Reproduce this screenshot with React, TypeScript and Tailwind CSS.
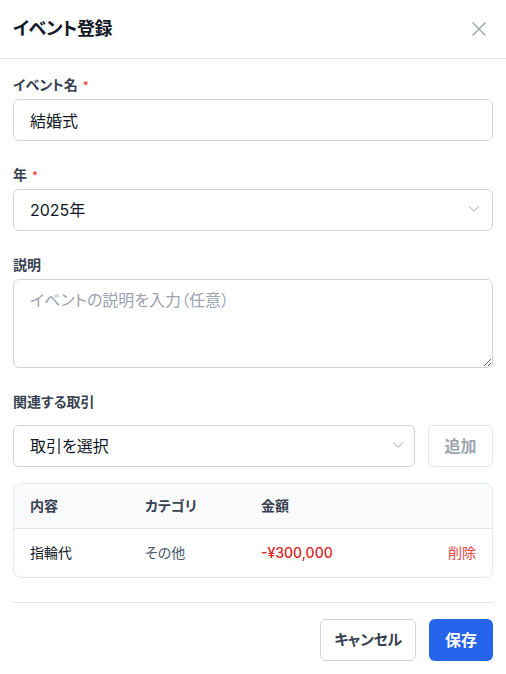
import { ChevronDown } from "lucide-react";

const rows = [{ name: "指輪代", category: "その他", amount: "-¥300,000" }];

function Label({ text, required }: { text: string; required?: boolean }) {
  return (
    <label className="flex items-center text-sm font-semibold leading-5 text-[#374151] mb-1">
      {text}
      {required && <span className="ml-[5px] text-[11px] leading-none text-[#ef4444]">*</span>}
    </label>
  );
}

export default function App() {
  return (
    <div className="w-[506px] h-[674px] bg-white text-[#111827] font-['Inter','Noto_Sans_CJK_JP',sans-serif] [font-feature-settings:'palt']">
      {/* Header */}
      <div className="h-[59px] flex items-center justify-between px-[13px] border-b border-[#e5e7eb]">
        <h1 className="text-lg font-bold text-[#111827] tracking-[-0.02em]">イベント登録</h1>
        <button className="w-6 h-6 flex items-center justify-center text-[#9ca3af] mr-[2px]">
          <svg width="14" height="14" viewBox="0 0 14 14" fill="none" stroke="currentColor" strokeWidth="1.4" strokeLinecap="round">
            <path d="M1 1l12 12M13 1L1 13" />
          </svg>
        </button>
      </div>

      {/* Body */}
      <div className="px-[13px] pt-4">
        <div className="mb-6">
          <Label text="イベント名" required />
          <input
            defaultValue="結婚式"
            className="w-full h-[42px] px-4 rounded-md border border-[#d1d5db] text-base text-[#111827] outline-none"
          />
        </div>

        <div className="mb-6">
          <Label text="年" required />
          <div className="relative">
            <select className="w-full h-[42px] pl-4 pr-10 rounded-md border border-[#d1d5db] bg-white text-base text-[#111827] appearance-none outline-none">
              <option>2025年</option>
            </select>
            <ChevronDown
              size={18}
              strokeWidth={1.3}
              className="absolute right-[10px] top-[11px] text-[#9ca3af] pointer-events-none"
            />
          </div>
        </div>

        <div className="mb-6">
          <Label text="説明" />
          <textarea
            placeholder="イベントの説明を入力（任意）"
            className="block w-full h-[89px] px-4 py-2 rounded-md border border-[#d1d5db] text-base text-[#111827] placeholder:text-[#9ca3af] outline-none"
          />
        </div>

        <div>
          <label className="block text-sm font-semibold leading-5 text-[#374151] mb-[13px]">関連する取引</label>
          <div className="flex gap-[13px]">
            <div className="relative flex-1">
              <select className="w-full h-[42px] pl-4 pr-10 rounded-md border border-[#d1d5db] bg-white text-base text-[#111827] appearance-none outline-none">
                <option>取引を選択</option>
              </select>
              <ChevronDown
                size={18}
                strokeWidth={1.3}
                className="absolute right-[8px] top-[11px] text-[#9ca3af] pointer-events-none"
              />
            </div>
            <button
              disabled
              className="w-[65px] h-[42px] rounded-md border border-[#e5e7eb] text-base font-semibold text-[#9ca3af]"
            >
              追加
            </button>
          </div>

          {/* Table */}
          <div className="mt-4 rounded-lg border border-[#e5e7eb] overflow-hidden">
            <div className="grid grid-cols-[115px_116px_1fr_auto] bg-[#f9fafb] border-b border-[#e5e7eb] text-sm font-semibold text-[#374151]">
              <div className="px-4 py-3 leading-5">内容</div>
              <div className="px-4 py-3 leading-5">カテゴリ</div>
              <div className="px-4 py-3 leading-5">金額</div>
              <div className="px-4 py-3 leading-5" />
            </div>
            {rows.map((r) => (
              <div key={r.name} className="grid grid-cols-[115px_116px_1fr_auto] text-sm">
                <div className="px-4 py-3.5 leading-5 text-[#111827]">{r.name}</div>
                <div className="px-4 py-3.5 leading-5 text-[#4b5563]">{r.category}</div>
                <div className="px-4 py-3.5 leading-5 font-medium text-[#dc2626]">{r.amount}</div>
                <div className="px-4 py-3.5 leading-5 text-right">
                  <button className="text-[#ef4444]">削除</button>
                </div>
              </div>
            ))}
          </div>
        </div>

        {/* Footer */}
        <div className="mt-6 pt-4 border-t border-[#e5e7eb] flex justify-end gap-[13px]">
          <button className="w-[96px] h-[42px] rounded-md border border-[#d1d5db] bg-white text-[15px] font-semibold text-[#374151] tracking-[-0.02em]">
            キャンセル
          </button>
          <button className="w-[64px] h-[42px] rounded-md bg-[#2563eb] text-base font-semibold text-white">
            保存
          </button>
        </div>
      </div>
    </div>
  );
}
